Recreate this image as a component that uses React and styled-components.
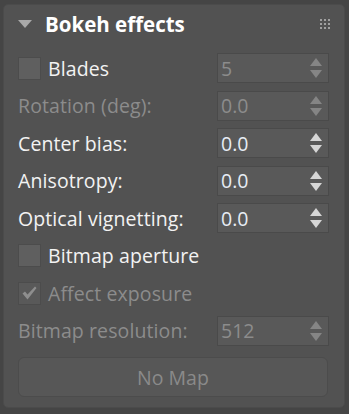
import styled, { createGlobalStyle } from "styled-components";

const GlobalStyle = createGlobalStyle`
  html, body {
    margin: 0;
    background: #454545;
  }
  body {
    padding: 4px 4px 0 3px;
    font-family: "Open Sans", "Noto Sans", sans-serif;
  }
`;

// Rollout panel
const Panel = styled.div`
  width: 342px;
  height: 404px;
  box-sizing: border-box;
  background: #525252;
  border: 1px solid #4b4b4b;
  border-radius: 5px;
  padding: 0 15px 0 14px;
`;

const Header = styled.div`
  height: 38px;
  display: flex;
  align-items: center;
  gap: 13px;
`;

const Caret = styled.span`
  width: 0;
  height: 0;
  border-left: 7px solid transparent;
  border-right: 7px solid transparent;
  border-top: 8px solid #a9a9a9;
`;

const Title = styled.span`
  flex: 1;
  color: #fff;
  font-size: 20.5px;
  font-weight: 700;
`;

const Grip = styled.div`
  display: grid;
  grid-template-columns: repeat(3, 2px);
  grid-auto-rows: 2px;
  gap: 2px;
  margin-right: -1px;
  div {
    background: #a0a0a0;
  }
`;

const Body = styled.div`
  display: flex;
  flex-direction: column;
  gap: 7.5px;
  padding-top: 10px;
`;

const Row = styled.div`
  height: 30px;
  display: flex;
  align-items: center;
  justify-content: space-between;
`;

const Label = styled.label`
  display: flex;
  align-items: center;
  gap: 7px;
  font-size: 19.5px;
  letter-spacing: 0.1px;
  color: ${(p) => (p.disabled ? "#8c8c8c" : "#f3f3f3")};
`;

const Box = styled.span`
  width: 21px;
  height: 21px;
  display: flex;
  align-items: center;
  justify-content: center;
  background: ${(p) => (p.disabled ? "#595959" : "#5f5f5f")};
  border: 1px solid #4c4c4c;
`;

const Spinner = styled.div`
  width: 112px;
  height: 30px;
  box-sizing: border-box;
  display: flex;
  align-items: center;
  padding: 0 6px 0 3px;
  background: #595959;
  border: 1px solid #4a4a4a;
  font-size: 19.5px;
  color: ${(p) => (p.disabled ? "#8c8c8c" : "#e6ecf4")};
`;

const Value = styled.span`
  flex: 1;
`;

const Arrows = styled.div`
  display: flex;
  flex-direction: column;
  gap: 4px;
`;

const Arrow = styled.span`
  width: 0;
  height: 0;
  border-left: 6px solid transparent;
  border-right: 6px solid transparent;
  ${(p) => (p.down ? "border-top" : "border-bottom")}: 8px solid
    ${(p) => (p.disabled ? "#858585" : "#d6d6d6")};
`;

const MapButton = styled.button`
  height: 40px;
  width: 310px;
  margin-top: 4px;
  background: #575757;
  border: 1px solid #4c4c4c;
  border-radius: 6px;
  color: #8a8a8a;
  font-family: inherit;
  font-size: 19.5px;
`;

const Check = ({ checked, disabled }) => (
  <Box disabled={disabled}>
    {checked && (
      <svg width="15" height="14" viewBox="0 0 15 14">
        <path d="M0.5 7.5 L3 5.5 L5.5 8.5 L13 0.5 L14.5 2 L5.5 13.5 Z" fill="#8e8e8e" />
      </svg>
    )}
  </Box>
);

const Field = ({ value, disabled }) => (
  <Spinner disabled={disabled}>
    <Value>{value}</Value>
    <Arrows>
      <Arrow disabled={disabled} />
      <Arrow down disabled={disabled} />
    </Arrows>
  </Spinner>
);

export default function App() {
  return (
    <>
      <GlobalStyle />
      <Panel>
        <Header>
          <Caret />
          <Title>Bokeh effects</Title>
          <Grip>
            {Array.from({ length: 9 }).map((_, i) => (
              <div key={i} />
            ))}
          </Grip>
        </Header>
        <Body>
          <Row>
            <Label>
              <Check />
              Blades
            </Label>
            <Field value="5" disabled />
          </Row>
          <Row>
            <Label disabled>Rotation (deg):</Label>
            <Field value="0.0" disabled />
          </Row>
          <Row>
            <Label>Center bias:</Label>
            <Field value="0.0" />
          </Row>
          <Row>
            <Label>Anisotropy:</Label>
            <Field value="0.0" />
          </Row>
          <Row>
            <Label>Optical vignetting:</Label>
            <Field value="0.0" />
          </Row>
          <Row>
            <Label>
              <Check />
              Bitmap aperture
            </Label>
          </Row>
          <Row>
            <Label disabled>
              <Check checked disabled />
              Affect exposure
            </Label>
          </Row>
          <Row>
            <Label disabled>Bitmap resolution:</Label>
            <Field value="512" disabled />
          </Row>
          <MapButton>No Map</MapButton>
        </Body>
      </Panel>
    </>
  );
}
